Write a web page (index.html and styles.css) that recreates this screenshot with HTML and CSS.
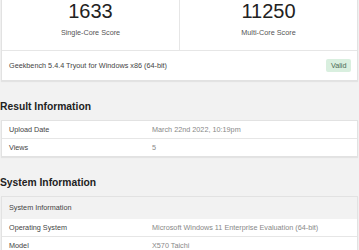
FILE: index.html
```html
<!DOCTYPE html>
<html lang="en">
<head>
  <meta charset="UTF-8">
  <title>Geekbench Result</title>
  <meta name="viewport" content="width=device-width, initial-scale=1.0">
  <link rel="stylesheet" href="styles.css">
</head>
<body>
  <div class="page">
    <div class="card score-card">
      <div class="scores">
        <div class="score">
          <div class="score-value">1633</div>
          <div class="score-name">Single-Core Score</div>
        </div>
        <div class="score">
          <div class="score-value">11250</div>
          <div class="score-name">Multi-Core Score</div>
        </div>
      </div>
      <div class="version">
        <span>Geekbench 5.4.4 Tryout for Windows x86 (64-bit)</span>
        <span class="badge">Valid</span>
      </div>
    </div>

    <h2>Result Information</h2>
    <div class="card table">
      <div class="row">
        <div class="name">Upload Date</div>
        <div class="value">March 22nd 2022, 10:19pm</div>
      </div>
      <div class="row">
        <div class="name">Views</div>
        <div class="value">5</div>
      </div>
    </div>

    <h2>System Information</h2>
    <div class="card table">
      <div class="row head">
        <div class="name">System Information</div>
      </div>
      <div class="row">
        <div class="name">Operating System</div>
        <div class="value">Microsoft Windows 11 Enterprise Evaluation (64-bit)</div>
      </div>
      <div class="row">
        <div class="name">Model</div>
        <div class="value">X570 Taichi</div>
      </div>
    </div>
  </div>
</body>
</html>
```

FILE: styles.css
```css
body {
  margin: 0;
  font-family: "Liberation Sans", Arial, sans-serif;
  font-size: 7.25px;
  color: #444;
  background-color: #f2f2f2;
}
.page {
  margin: -1px 1px 0 1px;
}
.card {
  background: #fff;
  border: 1px solid #e2e2e2;
  box-shadow: 0 1px 1px rgba(0, 0, 0, 0.06);
}
.scores {
  display: flex;
  border-bottom: 1px solid #e6e6e6;
}
.score {
  flex: 1;
  text-align: center;
  padding-bottom: 13.4px;
}
.score + .score {
  border-left: 1px solid #e6e6e6;
}
.score-value {
  font-size: 20px;
  line-height: 23px;
  color: #222;
}
.score-name {
  margin-top: 4.6px;
  line-height: 9px;
  color: #555;
}
.version {
  display: flex;
  align-items: center;
  justify-content: space-between;
  height: 29px;
  padding: 0 6px 0 7px;
  color: #444;
}
.badge {
  background-color: #d9efdf;
  color: #4d6b55;
  border-radius: 2px;
  padding: 0 4.5px;
  line-height: 13px;
}
h2 {
  font-size: 10.3px;
  line-height: 12px;
  font-weight: bold;
  color: #222;
  margin: 20px 0 7px -1px;
}
.row {
  display: grid;
  grid-template-columns: 143px 1fr;
  line-height: 17px;
}
.row + .row {
  border-top: 1px solid #e6e6e6;
}
.name, .value {
  padding: 0 7px;
  white-space: nowrap;
  overflow: hidden;
}
.value {
  color: #888;
}
.row.head {
  display: block;
  line-height: 22px;
  background-color: #f2f2f2;
}
.row.head + .row {
  border-top: none;
}
```
